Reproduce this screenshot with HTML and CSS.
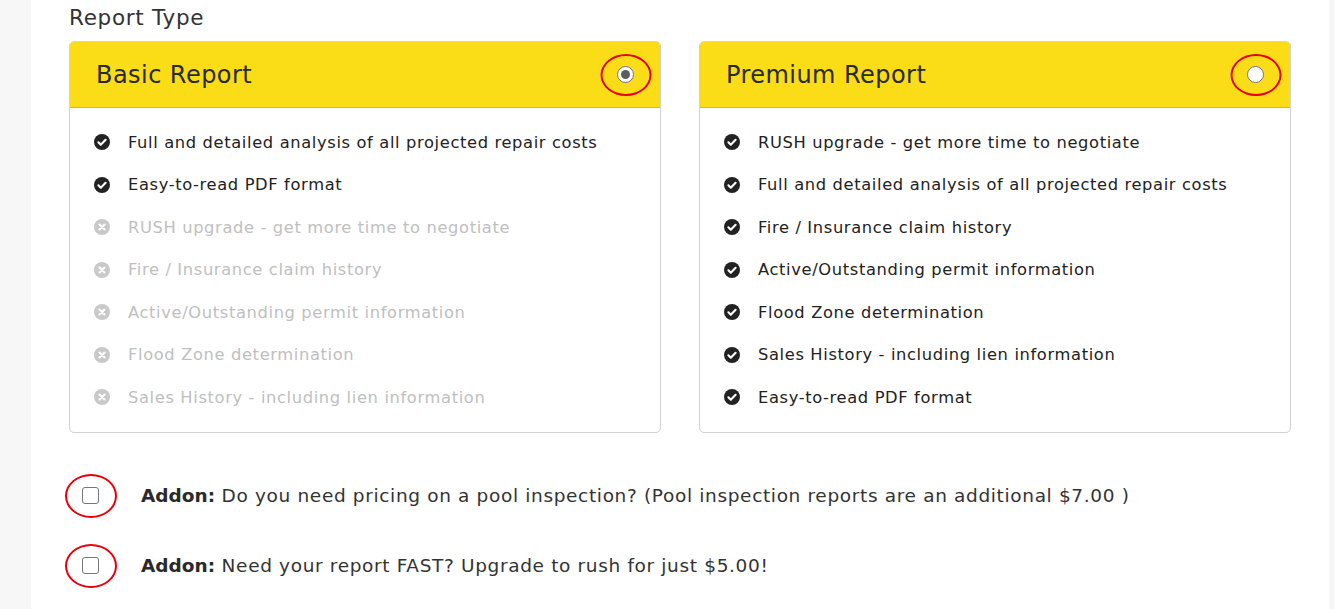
FILE: index.html
```html
<!DOCTYPE html>
<html>
<head>
<meta charset="utf-8">
<link rel="stylesheet" href="styles.css">
</head>
<body>
<div class="page">
  <div class="content">
    <h2 class="section-title">Report Type</h2>
    <div class="cards">
      <div class="card">
        <div class="card-head">
          <h3>Basic Report</h3>
          <span class="radio checked"><span class="mark"></span></span>
        </div>
        <ul class="features">
          <li><svg class="ic" viewBox="0 0 16 16"><circle cx="8" cy="8" r="8" fill="#222"/><path d="M4.4 8.3l2.4 2.4 4.8-4.9" fill="none" stroke="#fff" stroke-width="2.1" stroke-linecap="round" stroke-linejoin="round"/></svg>Full and detailed analysis of all projected repair costs</li>
          <li><svg class="ic" viewBox="0 0 16 16"><circle cx="8" cy="8" r="8" fill="#222"/><path d="M4.4 8.3l2.4 2.4 4.8-4.9" fill="none" stroke="#fff" stroke-width="2.1" stroke-linecap="round" stroke-linejoin="round"/></svg>Easy-to-read PDF format</li>
          <li class="off"><svg class="ic" viewBox="0 0 16 16"><circle cx="8" cy="8" r="8" fill="#c9c9c9"/><path d="M5.5 5.5l5 5M10.5 5.5l-5 5" fill="none" stroke="#fff" stroke-width="2.1" stroke-linecap="round"/></svg>RUSH upgrade - get more time to negotiate</li>
          <li class="off"><svg class="ic" viewBox="0 0 16 16"><circle cx="8" cy="8" r="8" fill="#c9c9c9"/><path d="M5.5 5.5l5 5M10.5 5.5l-5 5" fill="none" stroke="#fff" stroke-width="2.1" stroke-linecap="round"/></svg>Fire / Insurance claim history</li>
          <li class="off"><svg class="ic" viewBox="0 0 16 16"><circle cx="8" cy="8" r="8" fill="#c9c9c9"/><path d="M5.5 5.5l5 5M10.5 5.5l-5 5" fill="none" stroke="#fff" stroke-width="2.1" stroke-linecap="round"/></svg>Active/Outstanding permit information</li>
          <li class="off"><svg class="ic" viewBox="0 0 16 16"><circle cx="8" cy="8" r="8" fill="#c9c9c9"/><path d="M5.5 5.5l5 5M10.5 5.5l-5 5" fill="none" stroke="#fff" stroke-width="2.1" stroke-linecap="round"/></svg>Flood Zone determination</li>
          <li class="off"><svg class="ic" viewBox="0 0 16 16"><circle cx="8" cy="8" r="8" fill="#c9c9c9"/><path d="M5.5 5.5l5 5M10.5 5.5l-5 5" fill="none" stroke="#fff" stroke-width="2.1" stroke-linecap="round"/></svg>Sales History - including lien information</li>
        </ul>
      </div>
      <div class="card">
        <div class="card-head">
          <h3>Premium Report</h3>
          <span class="radio"><span class="mark"></span></span>
        </div>
        <ul class="features">
          <li><svg class="ic" viewBox="0 0 16 16"><circle cx="8" cy="8" r="8" fill="#222"/><path d="M4.4 8.3l2.4 2.4 4.8-4.9" fill="none" stroke="#fff" stroke-width="2.1" stroke-linecap="round" stroke-linejoin="round"/></svg>RUSH upgrade - get more time to negotiate</li>
          <li><svg class="ic" viewBox="0 0 16 16"><circle cx="8" cy="8" r="8" fill="#222"/><path d="M4.4 8.3l2.4 2.4 4.8-4.9" fill="none" stroke="#fff" stroke-width="2.1" stroke-linecap="round" stroke-linejoin="round"/></svg>Full and detailed analysis of all projected repair costs</li>
          <li><svg class="ic" viewBox="0 0 16 16"><circle cx="8" cy="8" r="8" fill="#222"/><path d="M4.4 8.3l2.4 2.4 4.8-4.9" fill="none" stroke="#fff" stroke-width="2.1" stroke-linecap="round" stroke-linejoin="round"/></svg>Fire / Insurance claim history</li>
          <li><svg class="ic" viewBox="0 0 16 16"><circle cx="8" cy="8" r="8" fill="#222"/><path d="M4.4 8.3l2.4 2.4 4.8-4.9" fill="none" stroke="#fff" stroke-width="2.1" stroke-linecap="round" stroke-linejoin="round"/></svg>Active/Outstanding permit information</li>
          <li><svg class="ic" viewBox="0 0 16 16"><circle cx="8" cy="8" r="8" fill="#222"/><path d="M4.4 8.3l2.4 2.4 4.8-4.9" fill="none" stroke="#fff" stroke-width="2.1" stroke-linecap="round" stroke-linejoin="round"/></svg>Flood Zone determination</li>
          <li><svg class="ic" viewBox="0 0 16 16"><circle cx="8" cy="8" r="8" fill="#222"/><path d="M4.4 8.3l2.4 2.4 4.8-4.9" fill="none" stroke="#fff" stroke-width="2.1" stroke-linecap="round" stroke-linejoin="round"/></svg>Sales History - including lien information</li>
          <li><svg class="ic" viewBox="0 0 16 16"><circle cx="8" cy="8" r="8" fill="#222"/><path d="M4.4 8.3l2.4 2.4 4.8-4.9" fill="none" stroke="#fff" stroke-width="2.1" stroke-linecap="round" stroke-linejoin="round"/></svg>Easy-to-read PDF format</li>
        </ul>
      </div>
    </div>
    <div class="addons">
      <label class="addon"><span class="checkbox"></span><span class="addon-text"><b>Addon:</b> Do you need pricing on a pool inspection? (Pool inspection reports are an additional $7.00 )</span></label>
      <label class="addon"><span class="checkbox"></span><span class="addon-text"><b>Addon:</b> Need your report FAST? Upgrade to rush for just $5.00!</span></label>
    </div>
  </div>
</div>
</body>
</html>
```
FILE: styles.css
```css
* { box-sizing: border-box; }
html, body { margin: 0; padding: 0; }
body {
  background: #f7f7f7;
  font-family: "DejaVu Sans", "Open Sans", sans-serif;
  color: #222;
}
.page {
  display: flex;
  padding-left: 31px;
  height: 609px;
  overflow: hidden;
}
.content {
  width: 1298px;
  background: #fff;
  padding: 3px 0 0 38px;
}
.section-title {
  margin: 0 0 8px 0;
  font-size: 21.5px;
  line-height: 30px;
  letter-spacing: 0.7px;
  font-weight: 400;
  color: #333;
}
.cards {
  display: flex;
  gap: 38px;
}
.card {
  width: 592px;
  border: 1px solid #d2d2d2;
  border-radius: 5px;
  overflow: hidden;
}
.card-head {
  height: 66px;
  background: #fadc17;
  border-bottom: 1px solid #dcbc10;
  display: flex;
  align-items: center;
  justify-content: space-between;
  padding: 0 26px 0 26px;
  position: relative;
}
.card-head h3 {
  margin: 0;
  font-size: 24px;
  letter-spacing: 0.45px;
  font-weight: 400;
  color: #2a2a2a;
}
.radio {
  width: 17px;
  height: 17px;
  border-radius: 50%;
  border: 1.5px solid #767676;
  background: #fff;
  display: flex;
  align-items: center;
  justify-content: center;
  position: relative;
}
.radio.checked .mark {
  width: 9px;
  height: 9px;
  border-radius: 50%;
  background: #5c5c5c;
}
.radio::after, .checkbox::after {
  content: "";
  position: absolute;
  left: 50%;
  top: 50%;
  width: 47px;
  height: 38px;
  transform: translate(-50%, -50%);
  border: 2px solid #e8000b;
  border-radius: 50%;
}
.features {
  list-style: none;
  margin: 0;
  padding: 13px 0 13px 24px;
}
.features li {
  display: flex;
  align-items: center;
  height: 42.5px;
  font-size: 16.3px;
  letter-spacing: 0.64px;
  color: #222;
}
.features li.off { color: #c0c0c0; }
.ic {
  width: 16px;
  height: 16px;
  margin-right: 18px;
  flex: none;
}
.addons {
  display: flex;
  flex-direction: column;
  padding-top: 43px;
  gap: 30px;
}
.addon {
  display: flex;
  align-items: center;
  height: 40px;
  font-size: 18.5px;
  letter-spacing: 0.65px;
  color: #333;
}
.checkbox {
  width: 17px;
  height: 17px;
  border: 1.5px solid #777;
  border-radius: 3px;
  background: #fff;
  position: relative;
  margin-left: 13px;
  margin-right: 42px;
  flex: none;
}
.checkbox::after { width: 48px; height: 40px; }
.addon-text b { font-weight: 700; letter-spacing: 0; color: #2a2a2a; }
```
